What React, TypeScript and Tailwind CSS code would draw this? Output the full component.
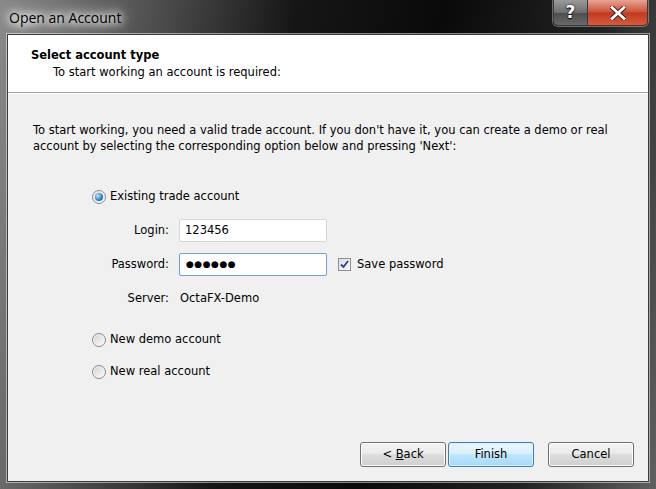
import React from "react";

const ui = { fontFamily: "Tahoma, 'DejaVu Sans', 'Liberation Sans', sans-serif" };

function Radio({ checked, label }: { checked?: boolean; label: string }) {
    return (
        <div className="flex items-center h-[16px]">
            <span className="w-[14px] h-[14px] rounded-full border border-[#8a8a8a] bg-gradient-to-br from-[#d4d4d4] to-[#fbfbfb] shadow-[inset_0_0_0_1px_#f4f4f4] flex items-center justify-center">
                {checked && (
                    <span className="w-[8px] h-[8px] rounded-full bg-[radial-gradient(circle_at_35%_35%,#c4e8ff,#2a86cc_55%,#0d4f8f)]" />
                )}
            </span>
            <span className="ml-[4px]">{label}</span>
        </div>
    );
}

function Button({ label, primary, underline }: { label: string; primary?: boolean; underline?: number }) {
    const text =
        underline !== undefined ? (
            <>
                {label.slice(0, underline)}
                <span className="underline">{label[underline]}</span>
                {label.slice(underline + 1)}
            </>
        ) : (
            label
        );
    return (
        <button
            className={
                "w-[86px] h-[25px] rounded-[3px] border text-[11.5px] text-black " +
                (primary
                    ? "border-[#3c7fb1] bg-[linear-gradient(#eaf6fd_0%,#d9f0fc_45%,#bee6fd_50%,#a7d9f5_100%)] shadow-[inset_0_0_0_1px_#dff2fc]"
                    : "border-[#707070] bg-[linear-gradient(#f2f2f2_0%,#ebebeb_45%,#dddddd_50%,#cfcfcf_100%)] shadow-[inset_0_0_0_1px_#fcfcfc]")
            }
            style={ui}
        >
            {text}
        </button>
    );
}

export default function App() {
    return (
        <div className="w-[656px] h-[489px] flex flex-col bg-[linear-gradient(100deg,#8a8a8a_0%,#4c4c4c_22%,#161616_40%,#0a0a0a_60%,#222222_82%,#606060_100%)] overflow-hidden">
            {/* title bar */}
            <div className="h-[34px] flex items-start justify-between pl-[9px] pr-[8px]">
                <span
                    className="mt-[8px] text-[14px] leading-[20px] text-black [text-shadow:0_0_6px_#fff,0_0_10px_#fff,0_0_14px_#fff,0_0_18px_#fff]"
                    style={{ fontFamily: "'Open Sans', 'Noto Sans', sans-serif" }}
                >
                    Open an Account
                </span>
                <div className="flex h-[26px] rounded-b-[5px] border border-t-0 border-[#3a3a3a] overflow-hidden shadow-[0_0_0_1px_rgba(255,255,255,0.35)]">
                    <div className="w-[34px] flex items-center justify-center bg-[linear-gradient(#9a9a9a_0%,#6e6e6e_50%,#4c4c4c_51%,#6a6a6a_100%)] border-r border-[#3a3a3a]">
                        <span className="text-white font-bold text-[17px] leading-none [text-shadow:0_0_2px_#000,0_1px_1px_#000]" style={{ fontFamily: "'DejaVu Sans', sans-serif" }}>?</span>
                    </div>
                    <div className="w-[59px] flex items-center justify-center bg-[linear-gradient(#e8a493_0%,#d1563d_45%,#c13a1f_52%,#d75b3c_100%)]">
                        <svg width="16" height="14" viewBox="0 0 16 14">
                            <path d="M2 1.5 L14 12.5 M14 1.5 L2 12.5" stroke="#3b1a12" strokeWidth="4.6" strokeLinecap="square" />
                            <path d="M2 1.5 L14 12.5 M14 1.5 L2 12.5" stroke="#fff" strokeWidth="2.8" strokeLinecap="square" />
                        </svg>
                    </div>
                </div>
            </div>

            {/* client area */}
            <div className="mx-[7px] mb-[7px] flex-1 border border-[#3a3a3a] shadow-[0_0_0_1px_rgba(255,255,255,0.5)] bg-[#f0f0f0] flex flex-col text-[11.5px] text-black" style={ui}>
                <div className="h-[58px] bg-white border-b border-[#a0a0a0] shadow-[0_1px_0_#fff] pl-[23px] pt-[12px]">
                    <div className="font-bold leading-[16px]">Select account type</div>
                    <div className="pl-[22px] leading-[16px] mt-[1px]">To start working an account is required:</div>
                </div>

                <div className="pl-[25px] mt-[29px] leading-[16px]">
                    <div>To start working, you need a valid trade account. If you don't have it, you can create a demo or real</div>
                    <div>account by selecting the corresponding option below and pressing 'Next':</div>
                </div>

                <div className="pl-[84px] mt-[35px] flex flex-col">
                    <Radio checked label="Existing trade account" />

                    <div className="flex items-center mt-[14px]">
                        <span className="w-[77px] text-right">Login:</span>
                        <div className="ml-[10px] w-[148px] h-[23px] bg-white border border-[#d5d5d5] rounded-[2px] flex items-center pl-[5px]">123456</div>
                    </div>

                    <div className="flex items-center mt-[11px]">
                        <span className="w-[77px] text-right">Password:</span>
                        <div className="ml-[10px] w-[148px] h-[23px] bg-white border border-[#6fa1d1] rounded-[2px] flex items-center pl-[6px] text-[9px] tracking-[0.5px]">●●●●●●</div>
                        <span className="ml-[11px] w-[13px] h-[13px] border border-[#8f8f8f] bg-[linear-gradient(135deg,#dcdcdc,#fafafa)] flex items-center justify-center">
                            <svg width="9" height="9" viewBox="0 0 9 9">
                                <path d="M1 4.5 L3.5 7 L8 1" fill="none" stroke="#2b3f8a" strokeWidth="1.8" />
                            </svg>
                        </span>
                        <span className="ml-[6px]">Save password</span>
                    </div>

                    <div className="flex items-center mt-[15px] h-[16px]">
                        <span className="w-[77px] text-right">Server:</span>
                        <span className="ml-[11px]">OctaFX-Demo</span>
                    </div>

                    <div className="mt-[25px]">
                        <Radio label="New demo account" />
                    </div>
                    <div className="mt-[16px]">
                        <Radio label="New real account" />
                    </div>
                </div>

                <div className="mt-auto mb-[14px] flex justify-end pr-[14px]">
                    <Button label="< Back" underline={2} />
                    <div className="ml-[2px]">
                        <Button label="Finish" primary />
                    </div>
                    <div className="ml-[14px]">
                        <Button label="Cancel" />
                    </div>
                </div>
            </div>
        </div>
    );
}
